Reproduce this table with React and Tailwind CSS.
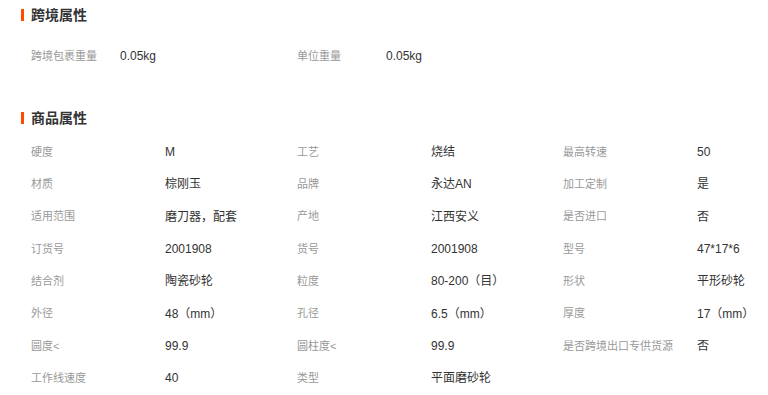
const crossBorder = [
  { label: "跨境包裹重量", value: "0.05kg" },
  { label: "单位重量", value: "0.05kg" },
];

const attrs = [
  ["硬度", "M"],
  ["工艺", "烧结"],
  ["最高转速", "50"],
  ["材质", "棕刚玉"],
  ["品牌", "永达AN"],
  ["加工定制", "是"],
  ["适用范围", "磨刀器，配套"],
  ["产地", "江西安义"],
  ["是否进口", "否"],
  ["订货号", "2001908"],
  ["货号", "2001908"],
  ["型号", "47*17*6"],
  ["结合剂", "陶瓷砂轮"],
  ["粒度", "80-200（目）"],
  ["形状", "平形砂轮"],
  ["外径", "48（mm）"],
  ["孔径", "6.5（mm）"],
  ["厚度", "17（mm）"],
  ["圆度<", "99.9"],
  ["圆柱度<", "99.9"],
  ["是否跨境出口专供货源", "否"],
  ["工作线速度", "40"],
  ["类型", "平面磨砂轮"],
];

function SectionTitle({ children, className = "" }) {
  return (
    <div className={`flex h-[30px] items-center gap-[7px] ${className}`}>
      <span className="h-[12px] w-[3px] bg-[#ff4a00]" />
      <h2 className="text-[14px] font-bold leading-none text-[#333]">{children}</h2>
    </div>
  );
}

export default function App() {
  return (
    <div
      className="h-[395px] w-[768px] overflow-hidden bg-white pl-[21px]"
      style={{ fontFamily: '"Liberation Sans", "Noto Sans CJK SC", sans-serif' }}
    >
      <SectionTitle>跨境属性</SectionTitle>
      <div className="mt-[10px] grid grid-cols-[266px_266px] pl-[10px]">
        {crossBorder.map((item) => (
          <div key={item.label} className="flex h-[32px] items-center">
            <span className="w-[89px] text-[11px] text-[#999]">{item.label}</span>
            <span className="text-[12px] text-[#333]">{item.value}</span>
          </div>
        ))}
      </div>

      <SectionTitle className="mt-[31px]">商品属性</SectionTitle>
      <div className="mt-[3px] grid grid-cols-[266px_266px_205px] pl-[10px]">
        {attrs.map(([label, value]) => (
          <div key={label} className="flex h-[32.3px] items-center">
            <span className="w-[134px] whitespace-nowrap text-[11px] text-[#999]">{label}</span>
            <span className="whitespace-nowrap text-[12px] text-[#333]">{value}</span>
          </div>
        ))}
      </div>
    </div>
  );
}
